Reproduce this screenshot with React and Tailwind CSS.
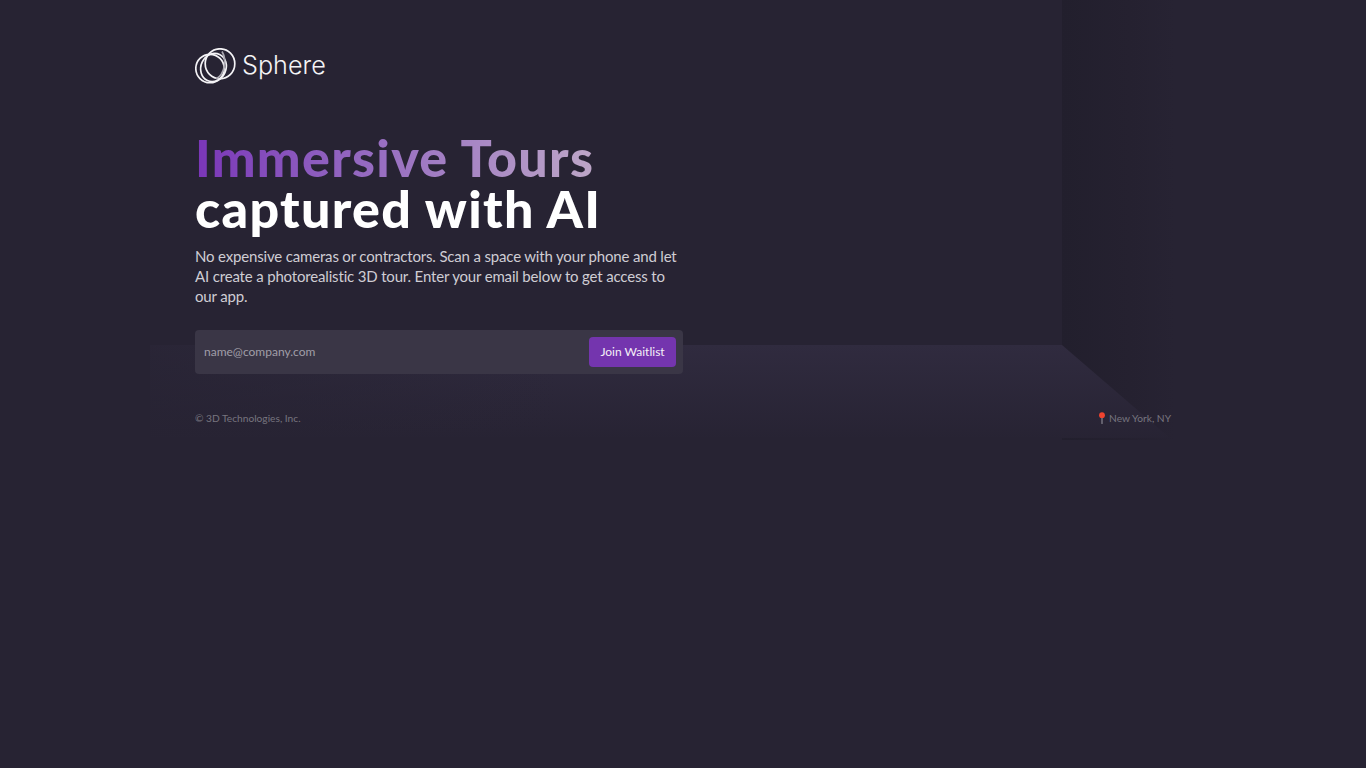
const Logo = () => (
    <svg width="41" height="36" viewBox="0 0 41 36" fill="none" stroke="#f4f3f6" strokeWidth="1.7">
        <ellipse cx="15" cy="20.5" rx="14.2" ry="14.2" />
        <ellipse cx="18.5" cy="19.5" rx="12.5" ry="14.4" transform="rotate(25 18.5 19.5)" />
        <ellipse cx="25" cy="15.8" rx="14.8" ry="15" />
        <path d="M27 3.5 C32 12 30 26 21 31" stroke="#a9a7b0" />
    </svg>
);

const Backdrop = () => (
    <svg className="absolute top-0 left-0" width="1366" height="768" viewBox="0 0 1366 768" fill="none">
        <defs>
            <linearGradient id="floor" x1="0" y1="345" x2="0" y2="440" gradientUnits="userSpaceOnUse">
                <stop offset="0" stopColor="#302b3f" />
                <stop offset="1" stopColor="#272333" />
            </linearGradient>
            <linearGradient id="floorEdge" x1="150" y1="0" x2="560" y2="0" gradientUnits="userSpaceOnUse">
                <stop offset="0" stopColor="#272333" stopOpacity="0.75" />
                <stop offset="1" stopColor="#272333" stopOpacity="0" />
            </linearGradient>
            <linearGradient id="wall" x1="1062" y1="0" x2="1175" y2="0" gradientUnits="userSpaceOnUse">
                <stop offset="0" stopColor="#221f2d" />
                <stop offset="0.6" stopColor="#252130" />
                <stop offset="1" stopColor="#272333" />
            </linearGradient>
        </defs>
        <rect x="1062" y="0" width="113" height="440" fill="url(#wall)" />
        <polygon points="150,345 1062,345 1170,438 150,438" fill="url(#floor)" />
        <rect x="150" y="345" width="410" height="93" fill="url(#floorEdge)" />
    </svg>
);

const PinIcon = () => (
    <svg width="8" height="12" viewBox="0 0 8 12" className="shrink-0">
        <rect x="3.4" y="4" width="1.2" height="8" rx="0.6" fill="#8a8893" />
        <circle cx="4" cy="3.2" r="2.9" fill="#f0432f" />
    </svg>
);

export default function App() {
    return (
        <div className="relative min-h-[768px] overflow-hidden bg-[#272333] font-['Lato',sans-serif]">
            <Backdrop />

            <div className="relative mx-auto w-[976px] pt-[48px]">
                <header className="flex items-center gap-[6px] h-[36px]">
                    <Logo />
                    <span className="font-['Inter',sans-serif] font-light text-[25.2px] leading-none text-[#f4f3f6]">Sphere</span>
                </header>

                <main className="w-[488px] mt-[48px]">
                    <h1 className="text-[52px] leading-[51px] font-black tracking-[1.3px] whitespace-nowrap">
                        <span className="block w-fit bg-gradient-to-r from-[#7a35b8] to-[#bda6c7] bg-clip-text text-transparent">Immersive Tours</span>
                        <span className="block text-white">captured with AI</span>
                    </h1>

                    <p className="mt-[12px] text-[15px] leading-[20px] tracking-[-0.17px] text-[#cfcdd4]">
                        No expensive cameras or contractors. Scan a space with your phone and let AI create a photorealistic 3D tour. Enter your email below to get access to our app.
                    </p>

                    <form className="mt-[24px] flex items-center justify-between h-[44px] pl-[9px] pr-[7px] rounded bg-[#3a3646]">
                        <input
                            type="email"
                            placeholder="name@company.com"
                            className="flex-1 bg-transparent outline-none text-[12px] text-white placeholder:text-[#a09ea8]"
                        />
                        <button type="button" className="h-[30px] w-[87px] rounded bg-[#7435ae] text-[12px] text-[#f4f0f7]">Join Waitlist</button>
                    </form>
                </main>

                <footer className="mt-[37px] flex items-center justify-between text-[10.2px] leading-[14px] text-[#77757f]">
                    <span>© 3D Technologies, Inc.</span>
                    <span className="flex items-center gap-[3px]"><PinIcon />New York, NY</span>
                </footer>
            </div>
        </div>
    );
}
